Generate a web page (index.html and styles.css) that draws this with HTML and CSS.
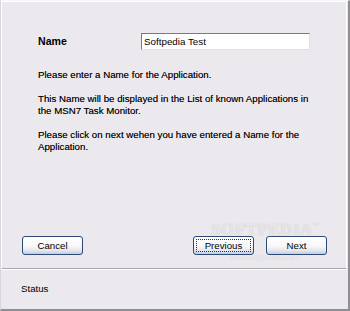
FILE: index.html
```html
<!DOCTYPE html>
<html lang="en">
<head>
  <meta charset="UTF-8">
  <meta name="viewport" content="width=device-width, initial-scale=1.0">
  <title>MSN7 Task Monitor - Application</title>
  <link rel="stylesheet" href="styles.css">
</head>
<body>

<div class="window">
  <div class="panel">
    <form class="content" id="form-name">
      <div class="name-row">
        <label for="app-name">Name</label>
        <input type="text" id="app-name" name="app-name" value="Softpedia Test">
      </div>

      <p>Please enter a Name for the Application.</p>
      <p>This Name will be displayed in the List of known Applications in the MSN7 Task Monitor.</p>
      <p>Please click on next wehen you have entered a Name for the Application.</p>
    </form>

    <div class="buttons">
      <button type="button" class="btn">Cancel</button>
      <span class="spacer"></span>
      <button type="button" class="btn focused">Previous</button>
      <button type="button" class="btn">Next</button>

      <!-- watermark over the buttons -->
      <span class="wm-logo">SOFTPEDIA<sup>™</sup></span>
      <span class="wm-url">www.softpedia.com</span>
    </div>
  </div>

  <div class="status">Status</div>
</div>

</body>
</html>
```

FILE: styles.css
```css
body {
  margin: 0;
  font-family: 'Liberation Sans', Arial, sans-serif;
  font-size: 9.7px;
  color: #000;
  background-color: #ebe9ed;
}

.window {
  width: 350px;
  height: 311px;
  box-sizing: border-box;
  display: flex;
  flex-direction: column;
  background-color: #ebe9ed;
  border-top: 1px solid #f6f5f8;
  border-left: 1px solid #d8d6dc;
  border-right: 2px solid #8f8e92;
  border-bottom: 2px solid #8f8e92;
}

.panel {
  height: 266px;
  display: flex;
  flex-direction: column;
  border-top: 1px solid #ffffff;
  border-left: 1px solid #ffffff;
  border-right: 1px solid #ffffff;
  border-bottom: 1px solid #a9a7ad;
  box-shadow: 0 1px 0 #ffffff;
  margin-right: 1px;
}

.content {
  flex: 1;
  padding: 30px 0 0 36px;
}

.name-row {
  display: flex;
  align-items: center;
  height: 18px;
  margin-bottom: 19px;
}

.name-row label {
  width: 103px;
  font-weight: bold;
  font-size: 10.6px;
}

.name-row input {
  width: 169px;
  height: 17px;
  box-sizing: border-box;
  margin: 0;
  padding: 0 2px;
  font-family: 'Liberation Sans', Arial, sans-serif;
  font-size: 9.8px;
  color: #000;
  background-color: #fff;
  border-top: 1px solid #7c7b80;
  border-left: 1px solid #7c7b80;
  border-right: 1px solid #e2e0e6;
  border-bottom: 1px solid #e2e0e6;
  outline: none;
}

p {
  width: 280px;
  margin: 0 0 12px 0;
  line-height: 12px;
  text-shadow: 0 0 0.4px rgba(0, 0, 0, 0.5);
}

.buttons {
  position: relative;
  display: flex;
  align-items: center;
  padding: 0 19px 13px 20px;
}

.spacer {
  flex: 1;
}

.btn {
  position: relative;
  width: 61px;
  height: 19px;
  margin: 0;
  padding: 0;
  font-family: 'Liberation Sans', Arial, sans-serif;
  font-size: 9.7px;
  color: #000;
  border: 1px solid #2b4a78;
  border-radius: 3px;
  background: linear-gradient(#ffffff, #f7f7f9 55%, #e4e6ee 80%, #c4cbdb);
}

.btn + .btn {
  margin-left: 12px;
}

.btn.focused::after {
  content: "";
  position: absolute;
  left: 2px;
  top: 2px;
  right: 2px;
  bottom: 2px;
  border: 1px dotted #333;
}

.wm-logo {
  position: absolute;
  left: 209px;
  top: -14px;
  line-height: 15px;
  font-family: 'Liberation Serif', serif;
  font-weight: bold;
  font-size: 17px;
  letter-spacing: 0.5px;
  color: rgba(255, 255, 255, 0.6);
  text-shadow: 0 0 1px rgba(140, 140, 146, 0.5);
  pointer-events: none;
}

.wm-logo sup {
  font-size: 6px;
  vertical-align: top;
  line-height: 6px;
}

.wm-url {
  position: absolute;
  left: 228px;
  top: 18px;
  line-height: 7px;
  font-size: 8px;
  color: rgba(255, 255, 255, 0.7);
  text-shadow: 0 0 1px rgba(140, 140, 146, 0.45);
  pointer-events: none;
}

.status {
  flex: 1;
  display: flex;
  align-items: center;
  padding-left: 20px;
  padding-bottom: 1px;
}
```
